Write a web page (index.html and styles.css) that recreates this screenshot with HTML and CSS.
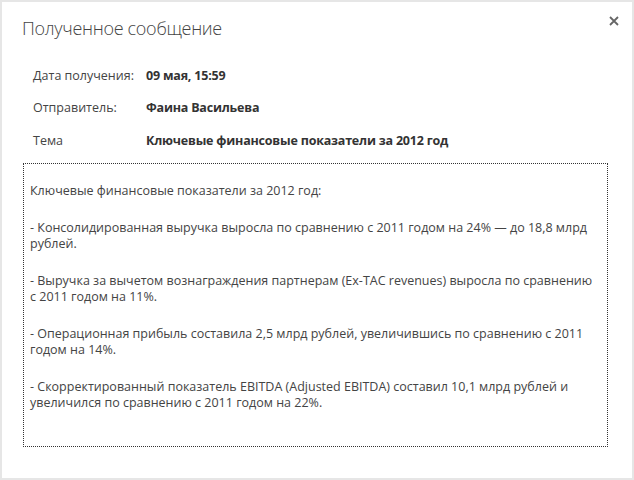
FILE: index.html
```html
<!DOCTYPE html>
<html lang="ru">
<head>
<meta charset="utf-8">
<link rel="stylesheet" href="styles.css">
</head>
<body>
<div class="dialog">
  <div class="header">
    <h1 class="title">Полученное сообщение</h1>
    <button class="close" aria-label="Закрыть">
      <svg width="10" height="10" viewBox="0 0 10 10"><path d="M1 1L9 9M9 1L1 9" stroke="#666" stroke-width="1.8" fill="none"/></svg>
    </button>
  </div>
  <div class="info">
    <div class="row"><span class="label">Дата получения:</span><span class="value">09 мая, 15:59</span></div>
    <div class="row"><span class="label">Отправитель:</span><span class="value">Фаина Васильева</span></div>
    <div class="row"><span class="label">Тема</span><span class="value">Ключевые финансовые показатели за 2012 год</span></div>
  </div>
  <div class="message">
    <p>Ключевые финансовые показатели за 2012 год:</p>
    <p>- Консолидированная выручка выросла по сравнению с 2011 годом на 24% — до 18,8 млрд рублей.</p>
    <p>- Выручка за вычетом вознаграждения партнерам (Ex-TAC revenues) выросла по сравнению с 2011 годом на 11%.</p>
    <p>- Операционная прибыль составила 2,5 млрд рублей, увеличившись по сравнению с 2011 годом на 14%.</p>
    <p>- Скорректированный показатель EBITDA (Adjusted EBITDA) составил 10,1 млрд рублей и увеличился по сравнению с 2011 годом на 22%.</p>
  </div>
</div>
</body>
</html>
```
FILE: styles.css
```css
html, body {
  margin: 0;
  padding: 0;
  background: #fff;
}
body {
  font-family: "Open Sans", "Noto Sans", sans-serif;
  color: #444;
}
.dialog {
  box-sizing: border-box;
  width: 634px;
  height: 480px;
  border: 2px solid #e6e6e6;
  background: #fff;
  padding: 0 25px 0 21px;
}
.header {
  display: flex;
  justify-content: space-between;
  align-items: flex-start;
  height: 55px;
}
.title {
  margin: 13px 0 0 -1px;
  font-size: 18px;
  font-weight: 300;
  color: #444;
  line-height: 26px;
  letter-spacing: -0.3px;
}
.close {
  margin: 14px -12px 0 0;
  padding: 0;
  border: 0;
  background: none;
  width: 10px;
  height: 10px;
  display: flex;
}
.info {
  padding: 2px 0 0 10px;
  font-size: 12.5px;
}
.row {
  display: flex;
  height: 32.5px;
  align-items: center;
}
.label {
  width: 113px;
  color: #444;
}
.value {
  font-weight: 700;
  color: #333;
  letter-spacing: -0.2px;
}
.message {
  box-sizing: border-box;
  margin-top: 6px;
  width: 585px;
  height: 284px;
  border: 1px dotted #333;
  padding: 19px 6px 0 6px;
  font-size: 12.5px;
  line-height: 16px;
  color: #444;
}
.message p {
  margin: 0 0 21px 0;
}
```
